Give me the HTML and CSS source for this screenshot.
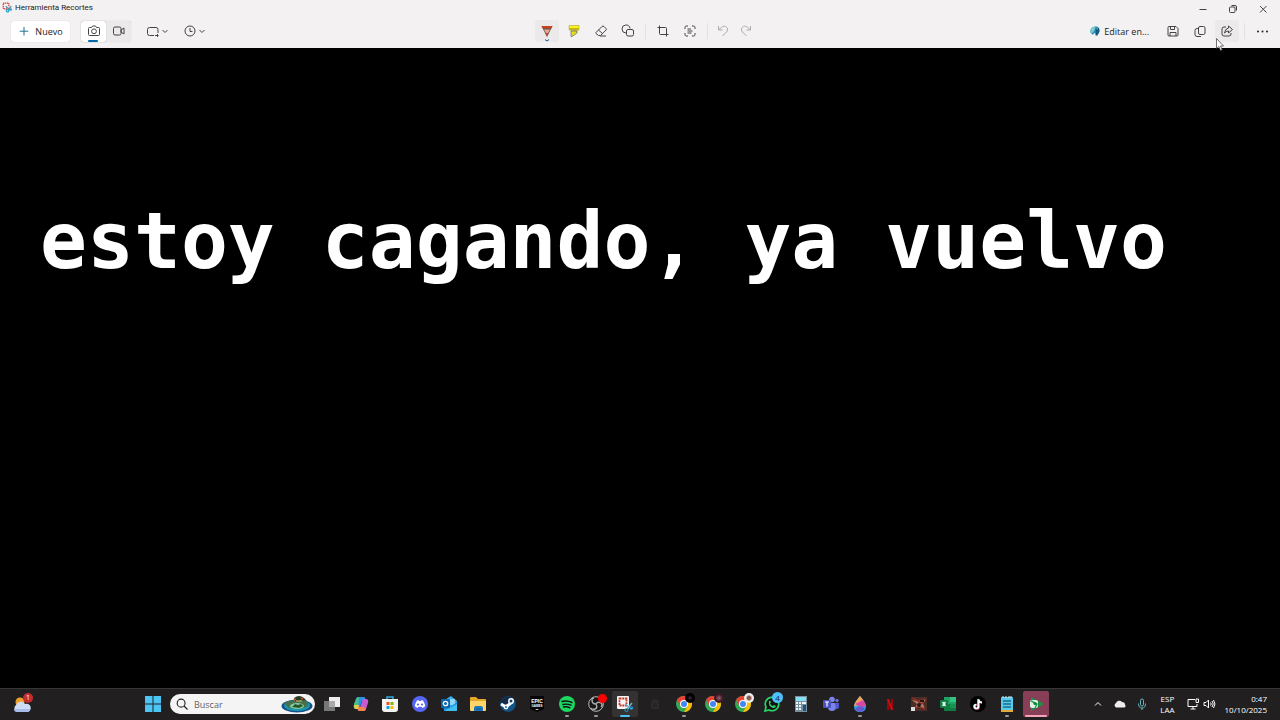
FILE: index.html
```html
<!DOCTYPE html>
<html lang="es">
<head>
  <meta charset="UTF-8">
  <meta name="viewport" content="width=device-width, initial-scale=1.0">
  <title>Herramienta Recortes</title>
  <link rel="stylesheet" href="styles.css">
</head>
<body>
  <header class="titlebar">
    <svg class="app-icon" viewBox="0 0 16 16" fill="none" stroke-width="2"><path d="M8 10H2V1h9v5" stroke="#d13438" stroke-dasharray="2 1"/><path d="M6 6l7 6M15 6l-6 6" stroke="#5a8ea0"/><circle cx="9" cy="13" r="2" stroke="#2b9fc4"/><circle cx="14" cy="11" r="1" stroke="#2b9fc4"/></svg>
    <h1 class="title">Herramienta Recortes</h1>
    <div class="window-buttons">
      <button aria-label="Minimizar"><svg class="icon line" viewBox="0 0 16 16"><path d="M4.500 8.500h7"/></svg></button>
      <button aria-label="Restaurar"><svg class="icon line" viewBox="0 0 16 16"><rect x="4.500" y="6" width="5.500" height="5.500" rx="1"/><path d="M6.500 4.500h3.500q1.500 0 1.500 1.500v3.500"/></svg></button>
      <button aria-label="Cerrar"><svg class="icon line" viewBox="0 0 16 16"><path d="M5 5l6.500 6.500M11.500 5L5 11.500"/></svg></button>
    </div>
  </header>

  <!-- Barra de herramientas -->
  <nav class="toolbar">
    <div class="tools-left">
      <button class="new"><svg class="icon line blue" viewBox="0 0 16 16"><path d="M8 4v8.500M3.700 8.200h8.600"/></svg>Nuevo</button>
      <div class="modes">
        <button class="mode selected" aria-label="Foto"><svg class="icon line" viewBox="0 0 16 16"><path d="M3.500 4.500h2l1-1.500h3l1 1.500h2q1 0 1 1v6q0 1-1 1h-9q-1 0-1-1v-6q0-1 1-1z"/><circle cx="8" cy="8.300" r="2.400"/></svg></button>
        <button class="mode" aria-label="Video"><svg class="icon line" viewBox="0 0 16 16"><rect x="2.500" y="4" width="7.500" height="8" rx="1.500"/><path d="M10 7l3-2v6l-3-2z"/></svg></button>
      </div>
      <button class="drop" aria-label="Forma de recorte"><svg class="icon line" viewBox="0 0 16 16"><path d="M9 12.500H4.500q-2 0-2-2v-4q0-2 2-2h6.500q2 0 2 2V10"/><path d="M10 12.500h3.500M12.500 11v3"/></svg><svg class="chevron line" viewBox="0 0 8 8"><path d="M1.500 3L4 5.500 6.500 3"/></svg></button>
      <button class="drop" aria-label="Retraso"><svg class="icon line" viewBox="0 0 16 16"><circle cx="8" cy="8" r="5"/><path d="M8 5v3.500h2.500"/></svg><svg class="chevron line" viewBox="0 0 8 8"><path d="M1.500 3L4 5.500 6.500 3"/></svg></button>
    </div>

    <div class="tools-center">
      <button class="tool active" aria-label="Bolígrafo"><svg class="icon" viewBox="0 0 16 16"><path d="M2.500 3h11L8 14z" fill="#555"/><path d="M2.500 3h11l-1.200 2.500H3.700z" fill="#c8431d"/><path d="M5 6.500h6L8 12z" fill="#f0a889"/><path d="M6.500 10h3L8 13.500z" fill="#c8431d"/></svg><svg class="pen-mark" viewBox="0 0 6 3"><path d="M1 .5L3 2 5 .5" fill="none" stroke="#14578c"/></svg></button>
      <button class="tool" aria-label="Marcador"><svg class="icon" viewBox="0 0 16 16"><path d="M3 2.500h10v3.500q0 1.500-1.500 1.500h-7Q3 7.500 3 6z" fill="#fdf01c" stroke="#a39b24" stroke-width=".5"/><path d="M3.500 6h9" stroke="#655f20" stroke-width=".8"/><path d="M5 8h6v2l-5 3.500H5z" fill="#e7da20" stroke="#666" stroke-width=".7"/></svg></button>
      <button class="tool" aria-label="Borrador"><svg class="icon line" viewBox="0 0 16 16"><path d="M3 9.500l6-6q1-1 2 0L13 5.500q.8.800 0 1.600l-5.500 5.400H5.500L3 10.500q-.5-.5 0-1zM5.500 7l4.500 4M7 13h6"/></svg></button>
      <button class="tool" aria-label="Formas"><svg class="icon line" viewBox="0 0 16 16"><path d="M6 10A4 4 0 1 1 10 5.500"/><rect x="6.500" y="6.500" width="7" height="6.500" rx="1.500"/></svg></button>
      <span class="separator"></span>
      <button class="tool" aria-label="Recortar imagen"><svg class="icon line" viewBox="0 0 16 16"><path d="M4.500 2.500v8q0 1 1 1h8M2.500 4.500h8q1 0 1 1v8"/></svg></button>
      <button class="tool" aria-label="Acciones de texto"><svg class="icon line" viewBox="0 0 16 16"><path d="M6 3H4.500Q3 3 3 4.500V6M10 3h1.500Q13 3 13 4.500V6M3 10v1.500Q3 13 4.500 13H6M13 10v1.500q0 1.500-1.500 1.500H10M5.500 6h3.500M5.500 8h5M5.500 10h4"/></svg></button>
      <span class="separator"></span>
      <button class="tool small" aria-label="Deshacer" disabled><svg class="icon line" viewBox="0 0 16 16"><path d="M3.500 3v4h4M4 6.500l2.500-2.200c4-3.300 8 1.700 5 4.700L7.500 13"/></svg></button>
      <button class="tool small" aria-label="Rehacer" disabled><svg class="icon line" viewBox="0 0 16 16"><path d="M12.500 3v4h-4M12 6.500L9.500 4.300c-4-3.300-8 1.700-5 4.700l4 4"/></svg></button>
    </div>

    <div class="tools-right">
      <button class="edit"><svg class="paint" viewBox="0 0 16 16"><path d="M2 10C1 5 5 2 9 2q5 0 5 5 0 6-5 7l-1-4-3 3z" fill="#2488b8"/><path d="M2 10C1 5 5 2 9 2L7 8l-3 3z" fill="#73cbd0"/><path d="M9 5l4-1 1 4-3 6-2 0z" fill="#145a86"/><circle cx="6" cy="6" r="1" fill="#edc452"/><circle cx="11" cy="5" r="1" fill="#55cda1"/></svg>Editar en...</button>
      <button class="tool" aria-label="Guardar"><svg class="icon line" viewBox="0 0 16 16"><path d="M4 3.500h7l2 2v6.500q0 1-1 1H4q-1 0-1-1V4.500q0-1 1-1zM5.500 3.500v3h4v-3M5 13V9.500h6V13"/></svg></button>
      <button class="tool" aria-label="Copiar"><svg class="icon line" viewBox="0 0 16 16"><rect x="6.500" y="3.500" width="6.500" height="8" rx="1.500"/><path d="M6.500 5.500H5q-2 0-2 2v4q0 2 2 2h4"/></svg></button>
      <button class="tool share" aria-label="Compartir"><svg class="icon line" viewBox="0 0 16 16"><path d="M7 4H5Q3 4 3 6v5q0 2 2 2h5q2 0 2-2v-1"/><path d="M9.500 3l4 3.500-4 3.500V8Q7 8 5.500 10 6 5.500 9.500 5z"/></svg>
        <svg class="pointer" viewBox="0 0 8 13"><path d="M.5.500v10l2.300-2 1.700 4 1.700-.8-1.700-3.700h3z" fill="#fff" stroke="#333" stroke-width=".7"/></svg></button>
      <span class="separator"></span>
      <button class="tool" aria-label="Ver más"><svg class="icon" viewBox="0 0 16 16" fill="#222"><circle cx="4" cy="8.500" r="1"/><circle cx="8.500" cy="8.500" r="1"/><circle cx="13" cy="8.500" r="1"/></svg></button>
    </div>
  </nav>

  <main class="canvas">
    <p class="message">estoy cagando, ya vuelvo</p>
  </main>

  <!-- Barra de tareas -->
  <footer class="taskbar">
    <button class="weather" aria-label="El tiempo"><svg viewBox="0 0 20 20"><circle cx="8" cy="8" r="4.500" fill="#f0a12c"/><path d="M5 18a4 4 0 0 1-1-7 5 5 0 0 1 9-1 4 4 0 0 1 3 8z" fill="#cfdcf5"/><path d="M2 15h16q0 3-3 3H5q-3 0-3-3z" fill="#a6bdec"/></svg><span class="alert">1</span></button>
    <button class="start" aria-label="Inicio"><svg viewBox="0 0 16 16" fill="#4cc5f5"><path d="M0 0h7.500v7.500H0zM8.500 0H16v7.500H8.500zM0 8.500h7.500V16H0zM8.500 8.500H16V16H8.500z"/></svg></button>
    <div class="search">
      <svg class="search-icon" viewBox="0 0 16 16" fill="none" stroke="#222" stroke-width="1.300"><circle cx="7" cy="7" r="4.500"/><path d="M10.300 10.300l4 4"/></svg>
      <input type="text" placeholder="Buscar" aria-label="Buscar">
      <svg class="island" viewBox="0 0 32 18"><ellipse cx="16" cy="11" rx="15.500" ry="6.500" fill="#174f8e"/><ellipse cx="16" cy="10.500" rx="13" ry="5.500" fill="#1998ad"/><path d="M3 9Q6 5 13 6q4-5 10 0 5 0 4 4-3 4-10 3Q8 15 5 10z" fill="#47714a"/><ellipse cx="16" cy="11" rx="7" ry="3" fill="#83cfa5"/><path d="M11 12l3-3 3 1 3-1 2 2-4 2z" fill="#28572e"/><path d="M13 3q5-4 10 0l3 3-7-1-5 1z" fill="#273d25"/><path d="M13 5l2-1M20 3l2 1" stroke="#c94f2f" stroke-width="1.500"/><path d="M15 6h6" stroke="#d6af5c"/></svg>
    </div>

    <div class="apps">
      <button aria-label="Vista de tareas"><svg viewBox="0 0 16 16"><path d="M5 1h11v10H5z" fill="#eee"/><path d="M0 5h11v10H0z" fill="#777"/><path d="M5 5h6v6H5z" fill="#aaa"/></svg></button>
      <button aria-label="Copilot"><svg viewBox="0 0 16 16"><path d="M5 1h6q1 0 1.500 2L13 5H9L6 13H3Q0 13 1 9l2-6q.5-2 2-2z" fill="#2c91e8"/><path d="M1 8l2-5q1-2 3-2L5 13H3Q0 13 1 8z" fill="#45bd86"/><path d="M11 15H6q-1 0-1.500-2L4 11h3l3-8h3q3 0 2 4l-2 6q-.5 2-2 2z" fill="#c75bd1"/><path d="M4 11h7l2 2q-1 2-2 2H6q-1 0-2-4z" fill="#f2854f"/><path d="M1 9h5l-1 4H3Q1 13 1 9z" fill="#edc844"/></svg></button>
      <button aria-label="Microsoft Store"><svg viewBox="0 0 16 16"><path d="M5 4V1h6v3" fill="none" stroke="#34aadf" stroke-width="1.500"/><path d="M0 3h16v10q0 3-3 3H3q-3 0-3-3z" fill="#f3f3f3"/><path d="M4.500 6h3v3h-3z" fill="#f25022"/><path d="M8.500 6h3v3h-3z" fill="#7fba00"/><path d="M4.500 10h3v3h-3z" fill="#00a4ef"/><path d="M8.500 10h3v3h-3z" fill="#ffb900"/></svg></button>
      <button aria-label="Discord"><svg viewBox="0 0 16 16"><circle cx="8" cy="8" r="8" fill="#5865f2"/><path d="M5 4.500l1.500-.5.500 1h2l.5-1 1.500.5 2 4v2L10.500 12l-1-1.300h-3L5.500 12 3 10.500v-2z" fill="#fff"/><circle cx="6" cy="8.500" r="1.100" fill="#5865f2"/><circle cx="10" cy="8.500" r="1.100" fill="#5865f2"/></svg></button>
      <button aria-label="Outlook"><svg viewBox="0 0 16 16"><path d="M2 5l8-5 6 5v9q0 1-1 1H3z" fill="#37adf0"/><path d="M6 3h8v6H6z" fill="#8fd5f7"/><path d="M3 7l6 4 7-5v9H3z" fill="#188fdc"/><path d="M3 15l13-7v6q0 1-1 1z" fill="#3fc0ee"/><rect y="3" width="9" height="9" rx="1" fill="#0b66aa"/><circle cx="4.500" cy="7.500" r="2.200" fill="none" stroke="#fff" stroke-width="1.300"/></svg></button>
      <button aria-label="Explorador de archivos"><svg viewBox="0 0 16 16"><path d="M0 2q0-1 1-1h5l2 2h7q1 0 1 1v9H0z" fill="#e4a72a"/><path d="M0 5h16v9q0 1-1 1H1q-1 0-1-1z" fill="#ffd567"/><path d="M4 15v-3q0-2 2-2h5q2 0 2 2v3z" fill="#2079c0"/><path d="M6 13h5" stroke="#135185"/></svg></button>
      <button aria-label="Steam"><svg viewBox="0 0 16 16"><circle cx="8" cy="8" r="7.800" fill="#11558b"/><path d="M1 4q4-5 10-3l3 3-7 5-6 1z" fill="#142c49"/><path d="M1 8l5 3 6-5" fill="none" stroke="#fff" stroke-width="3"/><circle cx="11" cy="5" r="3" fill="#fff"/><circle cx="11" cy="5" r="1.500" fill="#183e61"/><circle cx="6" cy="11" r="2.400" fill="#fff"/><circle cx="6" cy="11" r="1" fill="#1c679b"/></svg></button>
      <button aria-label="Epic Games"><svg viewBox="0 0 16 16"><path d="M1 0h14v13l-7 3-7-3z" fill="#050505"/><text x="8" y="7" class="epic-name">EPIC</text><text x="8" y="11" class="epic-sub">GAMES</text><path d="M6 13h4l-2 1z" fill="#fff"/></svg></button>
      <button class="open" aria-label="Spotify"><svg viewBox="0 0 16 16"><circle cx="8" cy="8" r="8" fill="#1ed760"/><path d="M3 5.500q5-1.500 10 1M4 8.500q4-1 8 .7M4.500 11q3.500-.7 6.500.8" fill="none" stroke="#111" stroke-width="1.400" stroke-linecap="round"/></svg></button>
      <button class="open" aria-label="OBS Studio"><svg viewBox="0 0 16 16"><circle cx="8" cy="8" r="7.300" fill="#171717" stroke="#bbb"/><path d="M8 8Q4 8 4 4q0-2 2-2M8 8q2-3 5-1 2 2 0 4M8 8q2 4-1 5-3 1-4-1" fill="none" stroke="#aaa" stroke-width="1.500"/></svg><span class="rec"></span></button>
      <button class="open current" aria-label="Herramienta Recortes"><svg viewBox="0 0 16 16"><rect width="12" height="13" rx="1" fill="#f8f8f8"/><path d="M2.500 2.500h7v7h-7z" fill="none" stroke="#c7392c" stroke-width="1.800" stroke-dasharray="2 .7"/><path d="M8 8l7 5M15 7l-5 6" stroke="#6eb1cd" stroke-width="1.500"/><circle cx="9.500" cy="14" r="1.600" fill="none" stroke="#16a5da"/><circle cx="14.500" cy="12" r="1.300" fill="none" stroke="#16a5da"/></svg></button>
      <button aria-label="Aplicación"><svg viewBox="0 0 16 16"><path d="M4 7q0-4 4-4t4 4v6H4z" fill="#2c2a2b"/><circle cx="8" cy="9" r="2" fill="#262425"/></svg></button>
      <button class="open" aria-label="Chrome"><svg viewBox="0 0 16 16"><use href="#chrome"/></svg><span class="profile black"></span></button>
      <button aria-label="Chrome, perfil 2"><svg viewBox="0 0 16 16"><use href="#chrome"/></svg><span class="profile maroon"></span></button>
      <button aria-label="Chrome, perfil 3"><svg viewBox="0 0 16 16"><use href="#chrome"/></svg><span class="profile light"></span></button>
      <button aria-label="WhatsApp"><svg viewBox="0 0 16 16"><path d="M1 15l1-4a6.700 6.700 0 1 1 3 3z" fill="#111" stroke="#29d366" stroke-width="1.700"/><path d="M5 5q1-1 2 1L6 7.500q1 2 3 2.500l1-1 2 1q-1 3-4 1.500Q4 10 5 5z" fill="#29d366"/></svg><span class="count">4</span></button>
      <button aria-label="Calculadora"><svg viewBox="0 0 16 16"><path d="M2 0h12v16H2z" fill="#78909c"/><path d="M3 1h10v4H3z" fill="#86def3"/><path d="M3 6h2v2H3zM6 6h2v2H6zM9 6h4v2H9zM3 9h2v2H3zM6 9h2v2H6zM3 12h2v2H3zM6 12h2v2H6z" fill="#eef4f6"/><path d="M10 9h3v6h-3z" fill="#195585"/></svg></button>
      <button aria-label="Microsoft Teams"><svg viewBox="0 0 16 16"><circle cx="9" cy="3.500" r="2.800" fill="#7b83eb"/><circle cx="14" cy="4.500" r="1.700" fill="#6970d4"/><path d="M5 7h8v4q0 4-4 4t-4-4z" fill="#7b83eb"/><path d="M12 7h4v4q0 2-3 2z" fill="#5059c9"/><rect y="4" width="8" height="8" rx="1" fill="#4b53bc"/><path d="M2 6h4M4 6v4.500" stroke="#fff" stroke-width="1.200"/></svg></button>
      <button class="open" aria-label="Paint 3D"><svg viewBox="0 0 16 16"><path d="M8 0q6 7 6 10 0 6-6 6t-6-6q0-3 6-10z" fill="#2da8e3"/><path d="M8 0l4 5-8 5-2 0q0-3 6-10z" fill="#f3a15a"/><path d="M11 4q3 4 3 6l-5 1-6-3z" fill="#d947a2"/><path d="M3 13q4-5 10-1-2 4-5 4t-5-3z" fill="#6958d3"/></svg></button>
      <button aria-label="Netflix"><svg viewBox="0 0 16 16"><path d="M9 3h2v11H9zM5 3h2v11H5z" fill="#980710"/><path d="M5 3h2l4 11H9z" fill="#d50914"/></svg></button>
      <button aria-label="Juego"><svg viewBox="0 0 16 16"><path d="M0 1h16v14H0z" fill="#4a2e27"/><path d="M1 4l7 1 7-2-3 5 2 5-6-2-4 1 2-4z" fill="#b37a60"/><path d="M1 2l6 3 8-2M7 5l3 3 3-2M4 12l4-1 6 2" fill="none" stroke="#8d2b25" stroke-width="1.500"/><path d="M0 11h4v4H0z" fill="#ddd"/><circle cx="8" cy="9" r="2" fill="#221b1b"/><path d="M9 4h4v2H9z" fill="#201718"/></svg></button>
      <button aria-label="Excel"><svg viewBox="0 0 16 16"><path d="M4 1h12v14H4z" fill="#21a366"/><path d="M10 1h6v5h-6z" fill="#33c481"/><path d="M4 8h12v7H4z" fill="#107c41"/><path d="M10 8h6v4h-6z" fill="#189452"/><rect y="4" width="8" height="8" rx="1" fill="#107c41"/><path d="M2.500 6l3 4M5.500 6l-3 4" stroke="#fff" stroke-width="1.300"/></svg></button>
      <button aria-label="TikTok"><svg viewBox="0 0 16 16"><circle cx="8" cy="8" r="8" fill="#000"/><path d="M8 3v7.500a2 2 0 1 1-2-2M8 3q.5 3 4 3.500" fill="none" stroke="#32dcdf" stroke-width="1.700"/><path d="M9 4v7a2 2 0 1 1-2-2M9 4q.5 2 3 3" fill="none" stroke="#e8335a" stroke-width="1.700"/><path d="M8.500 3.500v7a2 2 0 1 1-2-2M8.500 3.500q.5 3 3.500 3" fill="none" stroke="#fff" stroke-width="1.700"/></svg></button>
      <button class="open" aria-label="Bloc de notas"><svg viewBox="0 0 16 16"><rect x="2" y="1" width="12" height="15" rx="1" fill="#5bc9e8"/><path d="M2 14h12v2H2z" fill="#e2ab3b"/><path d="M4 0v2M7 0v2M10 0v2M12 0v2" stroke="#dceff4"/><path d="M4 5h8M4 8h8M4 11h8" stroke="#176d90" stroke-width="1.300"/></svg></button>
      <button class="open attention" aria-label="Grabador"><svg viewBox="0 0 16 16"><path d="M3 1l13 7-13 7z" fill="#159447"/><rect x="2" y="4" width="8" height="8" rx="2" fill="#dff5e4"/><path d="M3 5l6 3-2 4" fill="none" stroke="#26a64e" stroke-width="1.500"/><circle cx="7" cy="7.500" r="1.500" fill="#1e7544"/></svg></button>
    </div>

    <div class="tray">
      <button aria-label="Mostrar iconos ocultos"><svg class="icon white" viewBox="0 0 16 16"><path d="M5 9.500l3-3 3 3"/></svg></button>
      <button aria-label="OneDrive"><svg class="icon" viewBox="0 0 16 16"><path d="M4 11.500a2.500 2.500 0 0 1 0-4.500 3.500 3.500 0 0 1 6-1q3 0 3 2.500 1.500 3-1 3z" fill="#eee"/></svg></button>
      <button aria-label="Micrófono"><svg class="icon mic" viewBox="0 0 16 16"><rect x="6.500" y="3" width="3" height="7" rx="1.500"/><path d="M4.500 7.500q0 4.500 3.500 4.500t3.500-4.500M8 12v2"/></svg></button>
      <button class="language">ESP<br>LAA</button>
      <button class="status" aria-label="Red y volumen">
        <svg class="icon white" viewBox="0 0 16 16"><path d="M10 3.500H3v7h9V8M5.500 13h5M8 11v2M11 3h2.500v3.500H11z"/></svg>
        <svg class="icon white" viewBox="0 0 16 16"><path d="M3 6.500h2l2.500-2.500v8L5 9.500H3zM9.500 6.500q1.500 1.500 0 3M11 5q2.500 3 0 6M12.500 4q3 4 0 8"/></svg>
      </button>
      <button class="clock"><time datetime="2025-10-10T00:47">0:47<br>10/10/2025</time></button>
    </div>
  </footer>

  <svg width="0" height="0" class="defs" aria-hidden="true">
    <symbol id="chrome" viewBox="0 0 16 16"><circle cx="8" cy="8" r="8" fill="#34a853"/><path d="M1.100 4A8 8 0 0 1 14.900 4H8L4.500 10z" fill="#ea4335"/><path d="M14.900 4A8 8 0 0 1 8 16l3.500-6L8 4z" fill="#fbbc04"/><circle cx="8" cy="8" r="4" fill="#fff"/><circle cx="8" cy="8" r="3" fill="#4285f4"/></symbol>
  </svg>
</body>
</html>
```
FILE: styles.css
```css
* {
  box-sizing: border-box;
}
body {
  margin: 0;
  min-height: 100vh;
  display: flex;
  flex-direction: column;
  background: #000;
  color: #222;
  font-family: "Open Sans", "Noto Sans", sans-serif;
  font-size: 9px;
}
button {
  position: relative;
  display: flex;
  align-items: center;
  justify-content: center;
  flex: none;
  padding: 0;
  border: 0;
  background: none;
  color: inherit;
  font: inherit;
}
svg {
  display: block;
  flex: none;
}
.icon {
  width: 16px;
  height: 16px;
}
.line {
  fill: none;
  stroke: #444;
  stroke-linejoin: round;
}
.defs {
  position: absolute;
}

/* título */
.titlebar {
  display: flex;
  align-items: center;
  height: 18px;
  padding: 0 2px;
  background: #f3f1f2;
}
.app-icon {
  width: 10px;
  height: 16px;
  padding-bottom: 3px;
}
.title {
  margin: 0 auto 0 3px;
  padding-bottom: 3px;
  font-family: Roboto, "Open Sans", sans-serif;
  font-size: 8px;
  font-weight: normal;
  line-height: 12px;
}
.window-buttons {
  display: flex;
}
.window-buttons button {
  width: 30px;
  height: 18px;
}

/* herramientas */
.toolbar {
  display: grid;
  grid-template-columns: 1fr auto 1fr;
  align-items: center;
  height: 30px;
  padding: 0 6px 4px 11px;
  background: #f3f1f2;
}
.tools-left,
.tools-center,
.tools-right {
  display: flex;
  align-items: center;
}
.tools-center {
  gap: 3px;
  padding-left: 6px;
}
.tools-right {
  gap: 3px;
  justify-content: flex-end;
}
.new {
  gap: 3px;
  width: 59px;
  height: 21px;
  padding-right: 2px;
  border-radius: 3px;
  background: #fff;
  box-shadow: 0 0 1px #bbb;
}
.line.blue {
  stroke: #1d7199;
}
.modes {
  display: flex;
  margin: 0 14px 0 11px;
  border-radius: 3px;
  background: #ebe9ea;
  box-shadow: 0 0 1px #bbb;
}
.mode {
  width: 25px;
  height: 21px;
}
.selected {
  border-radius: 3px;
  background: #fff;
  box-shadow: 0 0 1px #999;
}
.selected::after {
  content: "";
  position: absolute;
  bottom: 0;
  left: 7px;
  width: 10px;
  height: 2px;
  border-radius: 1px;
  background: #0067a8;
}
.drop {
  margin-right: 13px;
}
.chevron {
  width: 8px;
  height: 8px;
}
.tool {
  width: 24px;
  height: 22px;
  border-radius: 3px;
}
.small {
  width: 20px;
}
.tool:disabled {
  opacity: 0.4;
}
.active,
.share {
  background: #ebe9ea;
}
.pen-mark {
  position: absolute;
  bottom: 0;
  left: 9px;
  width: 6px;
  height: 3px;
}
.separator {
  width: 1px;
  height: 16px;
  margin: 0 2px;
  background: #e3e1e2;
}
.edit {
  gap: 3px;
  margin-right: 9px;
}
.paint {
  width: 12px;
  height: 12px;
}
.pointer {
  position: absolute;
  top: 18px;
  left: 1px;
  z-index: 1;
  width: 8px;
  height: 13px;
}

/* captura */
.canvas {
  flex: 1;
  padding: 148px 40px 0;
  background: #000;
}
.message {
  margin: 0;
  color: #fff;
  font: bold 78px/91px "DejaVu Sans Mono", monospace;
  white-space: nowrap;
}

/* barra de tareas */
.taskbar {
  display: flex;
  align-items: center;
  height: 32px;
  padding: 0 13px 1px 12px;
  border-top: 1px solid #383536;
  background: #211f20;
  color: #fff;
}
.weather {
  width: 20px;
  height: 20px;
  margin-right: 113px;
}
.weather svg {
  width: 20px;
  height: 20px;
}
.alert,
.count,
.profile,
.rec {
  position: absolute;
  border-radius: 50%;
}
.alert {
  top: -1px;
  right: -1px;
  width: 10px;
  height: 10px;
  background: #c42b32;
  font-size: 7px;
  line-height: 10px;
}
.start svg,
.apps svg {
  width: 16px;
  height: 16px;
}
.search {
  display: flex;
  align-items: center;
  width: 145px;
  height: 20px;
  margin: 0 2px 0 9px;
  padding: 0 1px 0 5px;
  border-radius: 10px;
  background: #f5f4f5;
}
.search-icon {
  width: 14px;
  height: 14px;
}
.search input {
  flex: 1;
  min-width: 0;
  padding: 0 5px;
  border: 0;
  outline: 0;
  background: none;
  font: inherit;
}
.search input::placeholder {
  color: #656364;
}
.island {
  width: 34px;
  height: 18px;
}
.apps {
  display: grid;
  grid-template-columns: repeat(25, 1fr);
  justify-items: center;
  flex: 0 1 734px;
}
.apps button {
  width: 26px;
  height: 26px;
  border-radius: 2px;
}
.apps .current {
  background: #343233;
}
.apps .attention {
  background: #873e57;
}
.open::after {
  content: "";
  position: absolute;
  bottom: 0;
  left: 11px;
  width: 4px;
  height: 2px;
  border-radius: 1px;
  background: #999;
}
.current::after {
  left: 8px;
  width: 10px;
  background: #4cc2f0;
}
.attention::after {
  left: 2px;
  width: 22px;
  background: #f5a3b7;
}
.epic-name,
.epic-sub {
  fill: #fff;
  font-family: "Liberation Sans", sans-serif;
  font-weight: bold;
  text-anchor: middle;
}
.epic-name {
  font-size: 5px;
}
.epic-sub {
  font-size: 3px;
}
.rec {
  top: 3px;
  right: 2px;
  width: 9px;
  height: 9px;
  background: #f00;
}
.profile {
  top: 2px;
  right: 2px;
  width: 10px;
  height: 10px;
}
.black {
  background: radial-gradient(#39304a, #000 40%);
}
.maroon {
  background: radial-gradient(#8c5361 10%, #3a1926 50%);
}
.light {
  background: radial-gradient(#875b4d 25%, #eee 45%);
}
.count {
  top: 1px;
  right: 2px;
  width: 11px;
  height: 11px;
  background: #4cc2ff;
  color: #123;
  font-size: 8px;
  line-height: 11px;
}
.tray {
  display: flex;
  align-items: center;
  margin-left: auto;
  font-size: 8px;
  line-height: 11px;
}
.tray > button {
  margin-left: 6px;
}
.white,
.mic {
  fill: none;
  stroke: #fff;
}
.mic {
  stroke: #68b8c1;
}
.tray .language,
.tray .status {
  margin-left: 10px;
}
.tray .clock {
  margin-left: 8px;
  text-align: right;
}
```
